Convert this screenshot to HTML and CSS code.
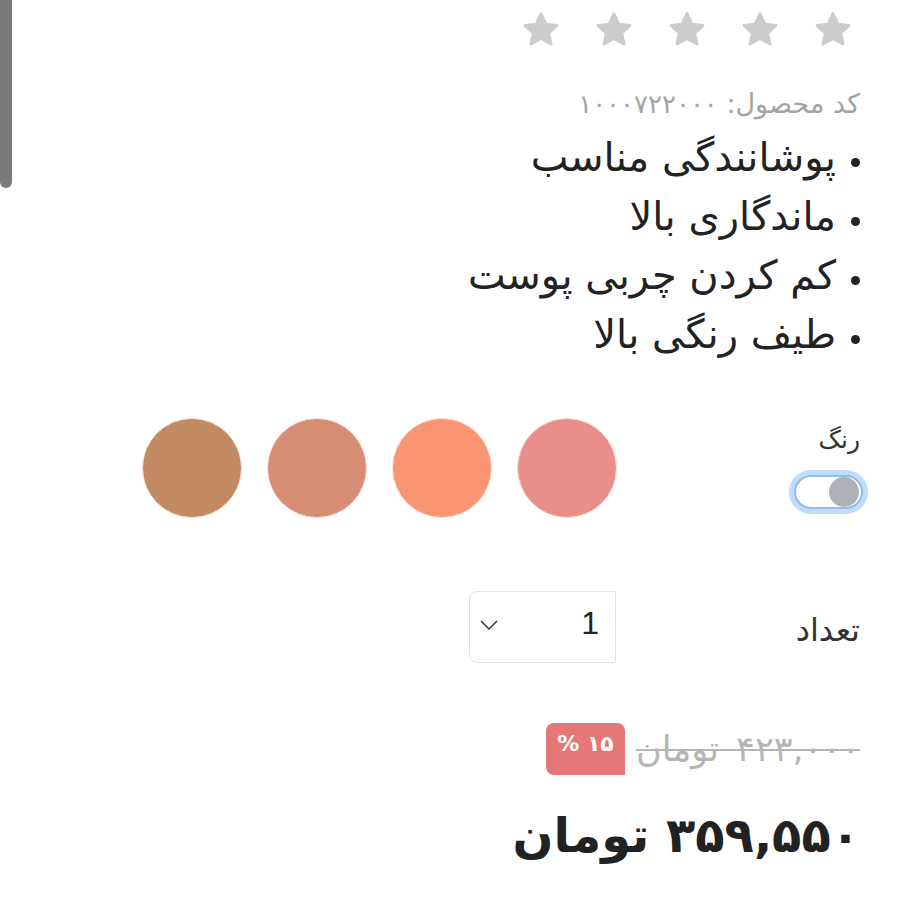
FILE: index.html
```html
<!DOCTYPE html>
<html lang="fa" dir="rtl">
<head>
<meta charset="utf-8">
<link rel="stylesheet" href="styles.css">
</head>
<body>
<div class="scrollbar"></div>
<main class="product">
  <div class="stars">
    <svg class="star" viewBox="0 0 24 24"><path d="M12 2.8l2.7 5.9 6.4.7-4.8 4.3 1.4 6.3L12 16.8l-5.7 3.2 1.4-6.3-4.8-4.3 6.4-.7z"/></svg>
    <svg class="star" viewBox="0 0 24 24"><path d="M12 2.8l2.7 5.9 6.4.7-4.8 4.3 1.4 6.3L12 16.8l-5.7 3.2 1.4-6.3-4.8-4.3 6.4-.7z"/></svg>
    <svg class="star" viewBox="0 0 24 24"><path d="M12 2.8l2.7 5.9 6.4.7-4.8 4.3 1.4 6.3L12 16.8l-5.7 3.2 1.4-6.3-4.8-4.3 6.4-.7z"/></svg>
    <svg class="star" viewBox="0 0 24 24"><path d="M12 2.8l2.7 5.9 6.4.7-4.8 4.3 1.4 6.3L12 16.8l-5.7 3.2 1.4-6.3-4.8-4.3 6.4-.7z"/></svg>
    <svg class="star" viewBox="0 0 24 24"><path d="M12 2.8l2.7 5.9 6.4.7-4.8 4.3 1.4 6.3L12 16.8l-5.7 3.2 1.4-6.3-4.8-4.3 6.4-.7z"/></svg>
  </div>
  <div class="code">کد محصول: <span class="digits">۱۰۰۰۷۲۲۰۰۰</span></div>
  <ul class="features">
    <li>پوشانندگی مناسب</li>
    <li>ماندگاری بالا</li>
    <li>کم کردن چربی پوست</li>
    <li>طیف رنگی بالا</li>
  </ul>
  <div class="color-row">
    <div class="color-label">
      <span>رنگ</span>
      <span class="toggle"><span class="knob"></span></span>
    </div>
    <div class="swatches">
      <span class="swatch s1"></span>
      <span class="swatch s2"></span>
      <span class="swatch s3"></span>
      <span class="swatch s4"></span>
    </div>
  </div>
  <div class="qty-row">
    <span class="qty-label">تعداد</span>
    <div class="select">
      <span class="val">1</span>
      <svg class="chev" viewBox="0 0 20 12"><path d="M2 2l8 8 8-8"/></svg>
    </div>
  </div>
  <div class="old-row">
    <span class="old"><span class="digits">۴۲۳,۰۰۰</span> تومان</span>
    <span class="badge">۱۵ %</span>
  </div>
  <div class="price"><span class="pdigits">۳۵۹,۵۵۰</span> تومان</div>
</main>
</body>
</html>
```
FILE: styles.css
```css
html, body {
  margin: 0;
  padding: 0;
  background: #fff;
}
body {
  font-family: "DejaVu Sans", "Noto Sans", sans-serif;
  color: #222;
  width: 900px;
  height: 900px;
  overflow: hidden;
  position: relative;
}
.scrollbar {
  position: absolute;
  left: 0;
  top: 0;
  width: 12px;
  height: 188px;
  background: #7a7a7a;
  border-radius: 0 0 6px 6px;
}
.product {
  padding: 9px 40px 0 40px;
  display: flex;
  flex-direction: column;
}
.stars {
  display: flex;
  gap: 31px;
  margin-right: 6px;
}
.star {
  width: 42px;
  height: 42px;
}
.star path {
  fill: #cccccc;
  stroke: #cccccc;
  stroke-width: 1.8;
  stroke-linejoin: round;
}
.code {
  margin-top: 38px;
  font-size: 27px;
  color: #a3a3a3;
  line-height: 30px;
}
.code .digits {
  letter-spacing: 5px;
  font-size: 26px;
}
.features {
  margin: 9px 0 0 0;
  padding: 0 24px 0 0;
  font-size: 40px;
  line-height: 59px;
  color: #222;
}
.features li::marker {
  font-size: 28px;
}
.color-row {
  display: flex;
  align-items: flex-start;
  margin-top: 54px;
}
.color-label {
  width: 243px;
  display: flex;
  flex-direction: column;
  align-items: flex-start;
  font-size: 25px;
  line-height: 32px;
  color: #333;
  padding-top: 6px;
}
.toggle {
  margin-top: 19px;
  margin-right: -3px;
  width: 69px;
  height: 34px;
  box-sizing: border-box;
  border: 2px solid #8fbcf0;
  border-radius: 18px;
  box-shadow: 0 0 0 5px #bfdcfb;
  background: #fff;
  display: flex;
  align-items: center;
  justify-content: flex-start;
  padding: 0 2px;
}
.knob {
  width: 30px;
  height: 30px;
  border-radius: 50%;
  background: #adb2ba;
}
.swatches {
  display: flex;
  gap: 25px;
}
.swatch {
  width: 98px;
  height: 98px;
  border-radius: 50%;
  border: 1px solid #fde3d6;
}
.s1 { background: #ea8e8c; }
.s2 { background: #fa9574; }
.s3 { background: #d68d74; }
.s4 { background: #c18a63; }
.qty-row {
  display: flex;
  align-items: center;
  margin-top: 73px;
}
.qty-label {
  width: 244px;
  font-size: 32px;
  color: #333;
  padding-top: 6px;
}
.select {
  width: 147px;
  height: 72px;
  box-sizing: border-box;
  border: 1px solid #e4e4e4;
  border-top-left-radius: 8px;
  border-bottom-left-radius: 8px;
  display: flex;
  align-items: center;
  justify-content: space-between;
  padding: 0 16px 0 9px;
}
.val {
  font-family: "Liberation Sans", Arial, sans-serif;
  font-size: 32px;
  color: #222;
  margin-top: -8px;
}
.chev {
  width: 20px;
  height: 12px;
  margin-top: -4px;
}
.chev path {
  fill: none;
  stroke: #333;
  stroke-width: 1.5;
}
.old-row {
  display: flex;
  align-items: center;
  gap: 11px;
  margin-top: 60px;
}
.old {
  font-size: 35px;
  color: #b5b5b5;
  text-decoration: line-through;
  text-decoration-thickness: 2px;
  word-spacing: 6px;
}
.old .digits {
  letter-spacing: 10px;
}
.badge {
  background: #e57776;
  color: #fff;
  font-weight: bold;
  font-size: 22px;
  width: 79px;
  height: 52px;
  box-sizing: border-box;
  display: flex;
  align-items: center;
  justify-content: center;
  padding-bottom: 12px;
  border-radius: 8px 8px 0 8px;
}
.price {
  margin-top: 32px;
  font-size: 48px;
  font-weight: bold;
  color: #222;
}
.pdigits {
  letter-spacing: 2px;
}
```
